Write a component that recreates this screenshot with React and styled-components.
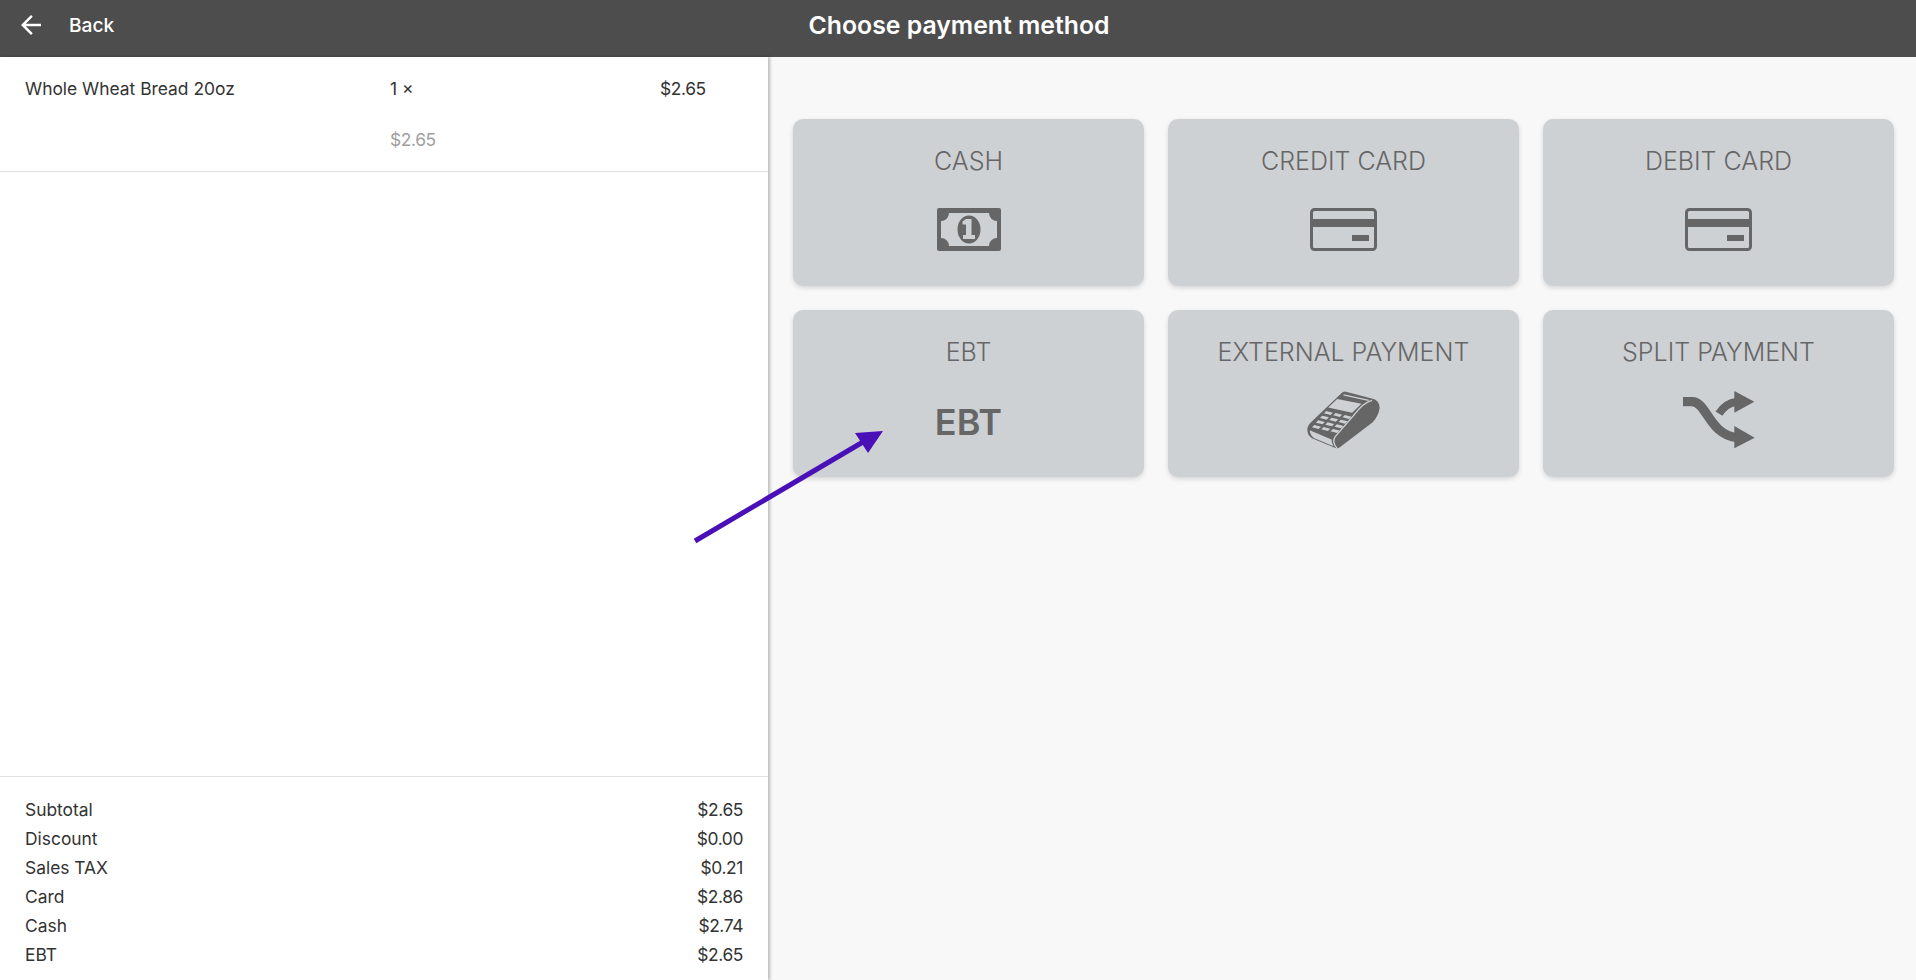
import React from 'react';
import styled, { createGlobalStyle } from 'styled-components';

const GlobalStyle = createGlobalStyle`
  html, body { margin: 0; padding: 0; height: 100%; background: #f8f8f8; }
  body { font-family: Inter, "Liberation Sans", sans-serif; overflow: hidden; }
`;

const Page = styled.div`
  position: relative;
  width: 1916px;
  height: 980px;
  display: flex;
  flex-direction: column;
`;

const Header = styled.header`
  height: 57px;
  flex: none;
  background: #4d4d4d;
  color: #fff;
  display: grid;
  grid-template-columns: 1fr auto 1fr;
  align-items: start;
  padding: 10px 16px 0;
  box-sizing: border-box;
`;

const BackButton = styled.div`
  display: flex;
  align-items: center;
  gap: 23px;
  height: 30px;
  font-size: 19.2px;
  font-weight: 500;
`;

const Title = styled.h1`
  margin: 0 0 0 2px;
  font-size: 24.8px;
  line-height: 30px;
  font-weight: 600;
`;

const Body = styled.div`
  flex: 1;
  display: flex;
  min-height: 0;
`;

const OrderPanel = styled.aside`
  width: 768px;
  flex: none;
  background: #fff;
  box-shadow: 2px 0 3px rgba(0, 0, 0, 0.25);
  display: flex;
  flex-direction: column;
  color: #333;
  font-size: 17.4px;
`;

const ItemRow = styled.div`
  height: 115px;
  flex: none;
  box-sizing: border-box;
  border-bottom: 1px solid #e2e2e2;
  padding: 19px 0 0 25px;
  display: grid;
  grid-template-columns: 365px 270px auto;
  grid-auto-rows: 51px;
  line-height: 26px;
`;

const Price = styled.span`
  letter-spacing: -0.4px;
  color: ${props => (props.$muted ? '#a0a0a0' : 'inherit')};
`;

const Spacer = styled.div`
  flex: 1;
`;

const Totals = styled.div`
  flex: none;
  height: 204px;
  box-sizing: border-box;
  border-top: 1px solid #e2e2e2;
  padding: 18px 25px 0 25px;
  display: flex;
  flex-direction: column;
`;

const TotalRow = styled.div`
  display: flex;
  justify-content: space-between;
  height: 29px;
  line-height: 29px;
`;

const Methods = styled.main`
  flex: 1;
  padding: 62px 22px 0 25px;
  display: grid;
  grid-template-columns: repeat(3, 351px);
  grid-auto-rows: 167px;
  column-gap: 24px;
  row-gap: 24px;
  align-content: start;
`;

const MethodCard = styled.div`
  background: #ced1d4;
  border-radius: 10px;
  box-shadow: 0 2px 5px rgba(0, 0, 0, 0.14);
  color: #666;
  display: flex;
  flex-direction: column;
  align-items: center;
`;

const MethodLabel = styled.div`
  margin-top: 26px;
  height: 32px;
  line-height: 32px;
  font-size: 25px;
  font-weight: 300;
`;

const MethodIcon = styled.div`
  flex: 1;
  display: flex;
  align-items: center;
  justify-content: center;
  padding-bottom: 5px;
`;

const EbtMark = styled.span`
  font-size: 36px;
  font-weight: 600;
  line-height: 1;
  padding-top: 4px;
`;

const ArrowOverlay = styled.svg`
  position: absolute;
  left: 0;
  top: 0;
  pointer-events: none;
`;

const CashIcon = () => (
  <svg width="64" height="43" viewBox="0 0 64 43">
    <path
      fill="#666"
      fillRule="evenodd"
      d="M2 0h60a2 2 0 0 1 2 2v39a2 2 0 0 1-2 2H2a2 2 0 0 1-2-2V2a2 2 0 0 1 2-2zM12 5a8 8 0 0 1-8 8v17a8 8 0 0 1 8 8h40a8 8 0 0 1 8-8V13a8 8 0 0 1-8-8z"
    />
    <ellipse cx="32" cy="21.5" rx="11.500" ry="14" fill="#666" />
    <path fill="#ced1d4" d="M29 11h5.500v16h3.500v4H26v-4h3v-10.500h-3.500v-3z" />
  </svg>
);

const CardIcon = () => (
  <svg width="67" height="43" viewBox="0 0 67 43">
    <rect x="1.500" y="1.500" width="64" height="40" rx="3" fill="none" stroke="#666" strokeWidth="3" />
    <rect x="2" y="11" width="63" height="8" fill="#666" />
    <rect x="42" y="27" width="17" height="6" fill="#666" />
  </svg>
);

const TerminalIcon = () => (
  <svg width="73" height="58" viewBox="50 38 220 174">
    <path
      fill="#666"
      d="M165 39L245 60Q268 64 269 88Q266 112 248 132L150 206Q142 213 130 207L65 180Q50 170 51 152Q52 140 66 128L152 46Q158 39 165 39z"
    />
    <path fill="none" stroke="#ced1d4" strokeWidth="4" d="M160 49L236 66M246 66Q220 72 190 112L135 175Q124 190 140 210" />
    <path fill="#ced1d4" d="M141 62L214 76L186 103L114 87z" />
    <path fill="#ced1d4" d="M58 156L124 184Q124 194 130 204L72 180Q60 172 58 156z" />
    {[0, 1, 2, 3].map(row =>
      [0, 1, 2].map(col => (
        <path
          key={`${row}-${col}`}
          fill="#ced1d4"
          d={`M${108 + col * 28 - row * 12} ${98 + col * 6 + row * 14}l20 5l-7 7l-20 -5z`}
        />
      ))
    )}
  </svg>
);

const SplitIcon = () => (
  <svg width="72" height="58" viewBox="488 280 216 174">
    <path fill="none" stroke="#666" strokeWidth="28" d="M488 312H515C560 312 565 410 650 420" />
    <path fill="#666" d="M642 385L703 420L642 452z" />
    <path fill="none" stroke="#666" strokeWidth="24" d="M596 348C610 325 625 315 650 312" />
    <path fill="#666" d="M642 280L702 312L642 345z" />
  </svg>
);

const items = [
  { label: 'CASH', icon: <CashIcon /> },
  { label: 'CREDIT CARD', icon: <CardIcon /> },
  { label: 'DEBIT CARD', icon: <CardIcon /> },
  { label: 'EBT', icon: <EbtMark>EBT</EbtMark> },
  { label: 'EXTERNAL PAYMENT', icon: <TerminalIcon /> },
  { label: 'SPLIT PAYMENT', icon: <SplitIcon /> },
];

const totals = [
  ['Subtotal', '$2.65'],
  ['Discount', '$0.00'],
  ['Sales TAX', '$0.21'],
  ['Card', '$2.86'],
  ['Cash', '$2.74'],
  ['EBT', '$2.65'],
];

export default function App() {
  return (
    <Page>
      <GlobalStyle />
      <Header>
        <BackButton>
          <svg width="30" height="30" viewBox="0 0 24 24" fill="#fff">
            <path d="M20 11H7.830l5.590-5.590L12 4l-8 8 8 8 1.410-1.410L7.830 13H20v-2z" />
          </svg>
          Back
        </BackButton>
        <Title>Choose payment method</Title>
      </Header>
      <Body>
        <OrderPanel>
          <ItemRow>
            <span>Whole Wheat Bread 20oz</span>
            <span>1 ×</span>
            <Price>$2.65</Price>
            <span />
            <Price $muted>$2.65</Price>
          </ItemRow>
          <Spacer />
          <Totals>
            {totals.map(([name, value]) => (
              <TotalRow key={name}>
                <span>{name}</span>
                <Price>{value}</Price>
              </TotalRow>
            ))}
          </Totals>
        </OrderPanel>
        <Methods>
          {items.map(item => (
            <MethodCard key={item.label}>
              <MethodLabel>{item.label}</MethodLabel>
              <MethodIcon>{item.icon}</MethodIcon>
            </MethodCard>
          ))}
        </Methods>
      </Body>
      <ArrowOverlay width="1916" height="980">
        <line x1="695" y1="541" x2="868" y2="439" stroke="#4a10b8" strokeWidth="5" />
        <path fill="#4a10b8" d="M883 431L855 433L868 453z" />
      </ArrowOverlay>
    </Page>
  );
}
